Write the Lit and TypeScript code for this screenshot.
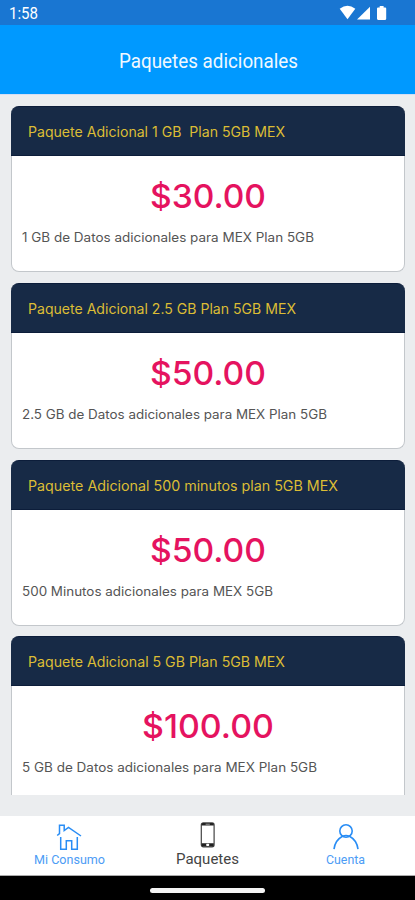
import { LitElement, html, css, svg } from "lit";
import { customElement, property } from "lit/decorators.js";

interface Plan {
  title: string;
  titleWidth: number;
  price: string;
  priceWidth: number;
  detail: string;
  detailWidth: number;
}

const PLANS: Plan[] = [
  { title: "Paquete Adicional 1 GB\u00a0 Plan 5GB MEX", titleWidth: 257, price: "$30.00", priceWidth: 116, detail: "1 GB de Datos adicionales para MEX Plan 5GB", detailWidth: 292 },
  { title: "Paquete Adicional 2.5 GB Plan 5GB MEX", titleWidth: 268, price: "$50.00", priceWidth: 116, detail: "2.5 GB de Datos adicionales para MEX Plan 5GB", detailWidth: 305 },
  { title: "Paquete Adicional 500 minutos plan 5GB MEX", titleWidth: 310, price: "$50.00", priceWidth: 116, detail: "500 Minutos adicionales para MEX 5GB", detailWidth: 251 },
  { title: "Paquete Adicional 5 GB Plan 5GB MEX", titleWidth: 257, price: "$100.00", priceWidth: 132, detail: "5 GB de Datos adicionales para MEX Plan 5GB", detailWidth: 295 },
];

/** One line of text set to a fixed measure. */
@customElement("fit-text")
class FitText extends LitElement {
  @property() text = "";
  @property({ type: Number }) width = 100;
  @property({ type: Number }) height = 20;
  @property({ type: Number }) baseline = 15;

  static styles = css`
    :host { display: block; line-height: 0; }
    svg { display: block; overflow: visible; }
    text { fill: currentColor; }
  `;

  render() {
    return html`<svg width=${this.width} height=${this.height}>
      ${svg`<text x="0" y=${this.baseline} textLength=${this.width} lengthAdjust="spacingAndGlyphs">${this.text}</text>`}
    </svg>`;
  }
}

@customElement("plan-card")
class PlanCard extends LitElement {
  @property({ attribute: false }) plan!: Plan;

  static styles = css`
    :host {
      display: block;
      box-sizing: border-box;
      height: 166px;
      flex: none;
      border-radius: 8px;
      border: 1px solid #c3c7cb;
      border-top: 0;
      background: #fff;
      font-family: Inter, "Open Sans", sans-serif;
    }
    .head {
      box-sizing: border-box;
      height: 50px;
      margin: 0 -1px;
      padding: 16px 0 0 16.5px;
      border-radius: 8px 8px 0 0;
      background: #172a46;
      border-bottom: 1px solid #0c1d3a;
      border-top: 1px solid #0c1d3a;
      color: #dcbd35;
      font-size: 13.8px;
    }
    .price {
      display: flex;
      justify-content: center;
      padding-top: 22px;
      color: #e5135f;
      font-size: 33px;
      font-weight: 500;
    }
    .detail {
      padding: 16px 0 0 10px;
      color: #555;
      font-size: 12.6px;
    }
  `;

  render() {
    const p = this.plan;
    return html`
      <div class="head"><fit-text .text=${p.title} .width=${p.titleWidth} .height=${20} .baseline=${14.2}></fit-text></div>
      <div class="price"><fit-text .text=${p.price} .width=${p.priceWidth} .height=${38} .baseline=${30}></fit-text></div>
      <div class="detail"><fit-text .text=${p.detail} .width=${p.detailWidth} .height=${18} .baseline=${10}></fit-text></div>
    `;
  }
}

@customElement("app-root")
class AppRoot extends LitElement {
  static styles = css`
    :host {
      display: flex;
      flex-direction: column;
      height: 900px;
      width: 100%;
      overflow: hidden;
      background: #ebedef;
      font-family: Roboto, sans-serif;
    }
    .status {
      box-sizing: border-box;
      height: 25px;
      flex: none;
      display: flex;
      justify-content: space-between;
      padding: 5px 28px 0 9px;
      background: #1976d2;
      color: #fff;
      font-size: 16px;
    }
    .bar {
      box-sizing: border-box;
      height: 70px;
      flex: none;
      display: flex;
      justify-content: center;
      padding: 23px 0 0 2px;
      border-bottom: 1px solid #d3def5;
      background: #0099ff;
      color: #f0f8ff;
      font-size: 19.6px;
      font-weight: 400;
      -webkit-text-stroke: 0.4px #f0f8ff;
    }
    .list {
      box-sizing: border-box;
      height: 700px;
      flex: none;
      overflow: hidden;
      display: flex;
      flex-direction: column;
      gap: 10.7px;
      padding: 11.4px 10px 0 11px;
    }
    .nav {
      box-sizing: border-box;
      height: 60px;
      flex: none;
      margin-top: 21px;
      display: grid;
      grid-template-columns: 1fr 1fr 1fr;
      background: #fff;
      border-bottom: 1px solid #aaa;
    }
    .tab {
      display: flex;
      flex-direction: column;
      align-items: center;
      padding-top: 5px;
      color: #4c9cf5;
      font-size: 12.6px;
    }
    .tab svg { display: block; flex: none; }
    .tab.current { color: #444; font-size: 14.2px; }
    .home {
      flex: 1;
      display: flex;
      justify-content: center;
      align-items: flex-start;
      background: #000;
    }
    .pill {
      width: 115px;
      height: 5px;
      margin-top: 11.5px;
      border-radius: 3px;
      background: #f4f4f4;
    }
  `;

  render() {
    return html`
      <div class="status">
        <fit-text .text=${"1:58"} .width=${29} .height=${18} .baseline=${14.3}></fit-text>
        <svg width="48" height="16" viewBox="339 5 48 16" fill="#fff">
          <path d="M339.7 8.7Q347.5 2.8 355.3 8.7L347.5 19.3Z" />
          <path d="M357 19.6L370 6.8V19.6Z" />
          <path d="M378.1 7.4H379.7V5.9H383.6V7.4H385.2Q386.2 7.4 386.2 8.4V18.8Q386.2 19.9 385.2 19.9H378.1Q377 19.9 377 18.8V8.4Q377 7.4 378.1 7.4Z" />
        </svg>
      </div>
      <div class="bar">
        <fit-text .text=${"Paquetes adicionales"} .width=${179} .height=${26} .baseline=${20.3}></fit-text>
      </div>
      <div class="list">${PLANS.map((p) => html`<plan-card .plan=${p}></plan-card>`)}</div>
      <div class="nav">
        <div class="tab">
          <svg width="28" height="30" viewBox="0 0 28 30" fill="none" stroke="#298df5" stroke-width="1.5">
            <path d="M2.2 14.5L4.5 12.6V4.2H9.2V9.6L13.5 6.4L26 15" />
            <path d="M5.7 16V28.3H11.3V19.8H16.7V28.3H22.3V16" />
          </svg>
          <fit-text .text=${"Mi Consumo"} .width=${71} .height=${16} .baseline=${13.3}></fit-text>
        </div>
        <div class="tab current">
          <svg width="16" height="30" viewBox="-0.6 0 16 30">
            <rect x="1.7" y="1.8" width="12.8" height="24" rx="2" fill="#fff" stroke="#444" stroke-width="1.2" />
            <path d="M2 4.5V3.3Q2 2 3.5 2H12.7Q14.2 2 14.2 3.3V4.5ZM2 22.3H14.2V24.2Q14.2 25.5 12.7 25.5H3.5Q2 25.5 2 24.2Z" fill="#222" />
            <path d="M6 3.2H10.2" stroke="#bbb" stroke-width=".8" />
            <rect x="6.6" y="22.7" width="3" height="2.3" rx=".7" fill="#fff" />
          </svg>
          <fit-text .text=${"Paquetes"} .width=${63} .height=${16} .baseline=${13}></fit-text>
        </div>
        <div class="tab">
          <svg width="28" height="30" viewBox="0 0 28 30" fill="none" stroke="#298df5" stroke-width="1.6">
            <circle cx="14" cy="10" r="6.2" />
            <path d="M2 28.2C2.7 21.5 6.8 17.2 10.5 15.2Q14 13.9 17.5 15.2C21.2 17.2 25.3 21.5 26 28.2" />
          </svg>
          <fit-text .text=${"Cuenta"} .width=${39} .height=${16} .baseline=${13.3}></fit-text>
        </div>
      </div>
      <div class="home"><div class="pill"></div></div>
    `;
  }
}
